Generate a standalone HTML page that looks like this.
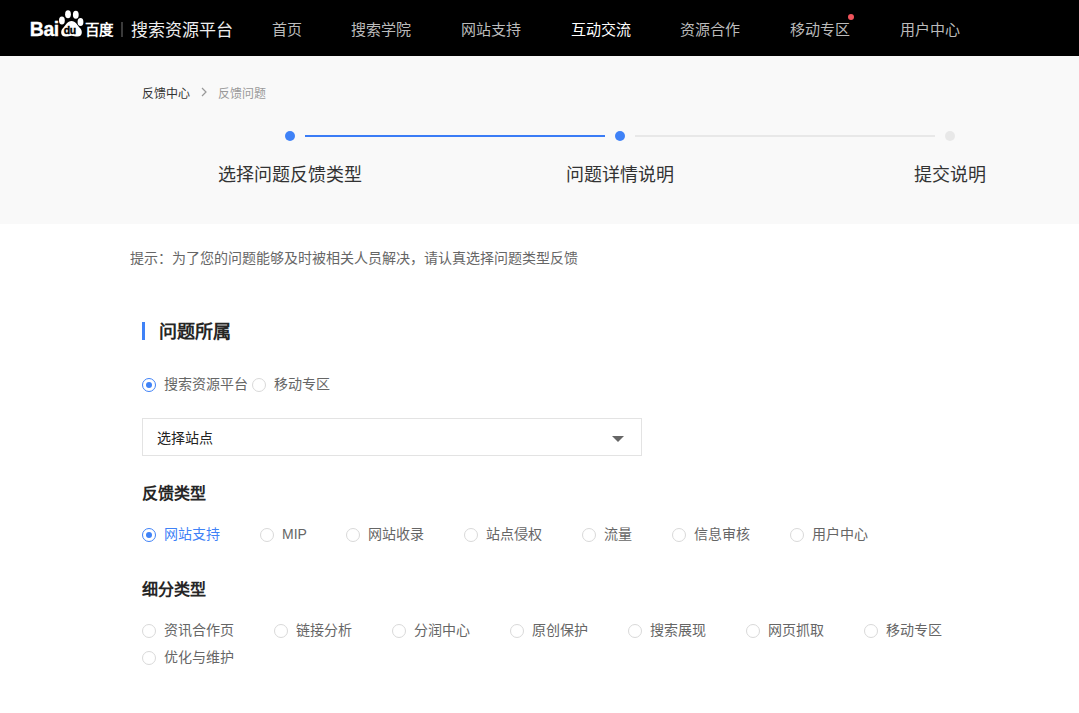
<!DOCTYPE html>
<html lang="zh-CN">
<head>
<meta charset="utf-8">
<style>
*{margin:0;padding:0;box-sizing:border-box}
html,body{width:1079px;height:713px;overflow:hidden;background:#fff;font-family:"Liberation Sans",sans-serif}
.abs{position:absolute;white-space:nowrap}
#hd{position:absolute;left:0;top:0;width:1079px;height:56px;background:#000}
.nav{position:absolute;top:2px;height:56px;line-height:56px;font-size:15px;color:#bbb}
.nav.on{color:#fff}
#band{position:absolute;left:0;top:56px;width:1079px;height:168px;background:#f9f9f9}
.crumb{font-size:12px;line-height:14px}
.dot{position:absolute;width:10px;height:10px;border-radius:50%;background:#3f82f7}
.line{position:absolute;height:2px;background:#3a7cf6}
.step{position:absolute;font-size:18px;line-height:24px;color:#333;text-align:center}
.tip{font-size:14px;color:#666;line-height:16px}
.h2{font-size:18px;font-weight:bold;color:#262626;line-height:20px}
.h3{font-size:16px;font-weight:bold;color:#262626;line-height:20px}
.rad{position:absolute;width:14px;height:14px;border:1px solid #d9d9d9;border-radius:50%;background:#fff}
.rad.on{border-color:#3f82f7}
.rad.on::after{content:"";position:absolute;left:3px;top:3px;width:6px;height:6px;border-radius:50%;background:#3f82f7}
.lbl{position:absolute;font-size:14px;line-height:16px;color:#666;white-space:nowrap}
.lbl.on{color:#3f82f7}
</style>
</head>
<body>
<div id="hd">
  <!-- logo -->
  <svg class="abs" style="left:0;top:0" width="130" height="56" viewBox="0 0 130 56">
    <g fill="#fff">
      <text x="29.8" y="36.2" font-family="Liberation Sans" font-weight="bold" font-size="19.5" letter-spacing="-0.5" stroke="#fff" stroke-width="0.3">Bai</text>
      <ellipse cx="68" cy="14.2" rx="2.9" ry="4"/>
      <ellipse cx="75.8" cy="14.8" rx="2.9" ry="4"/>
      <ellipse cx="61.9" cy="20.4" rx="2.9" ry="4"/>
      <ellipse cx="80.5" cy="22" rx="2.9" ry="4"/>
      <path d="M71.5 21C67.5 21 65.5 25.5 62.8 28.3C60 31.2 60.8 36.6 65.3 36.6C68.2 36.6 69.3 35.7 71.5 35.7C73.7 35.7 74.8 36.6 77.7 36.6C82.2 36.6 83 31.2 80.2 28.3C77.5 25.5 75.5 21 71.5 21Z"/>
    </g>
    <text x="63.8" y="33.5" fill="#000" font-family="Liberation Sans" font-weight="bold" font-size="10.5" letter-spacing="-0.5" stroke="#000" stroke-width="0.35">du</text>
  </svg>
  <div class="abs" style="left:85px;top:18.5px;font-size:14.5px;font-weight:900;color:#fff;line-height:22px;letter-spacing:0px">百度</div>
  <div class="abs" style="left:121px;top:22px;width:1.5px;height:15px;background:#3a3a3a"></div>
  <div class="abs" style="left:131px;top:18px;font-size:17px;color:#eee;line-height:26px">搜索资源平台</div>
  <div class="nav" style="left:272px">首页</div>
  <div class="nav" style="left:351px">搜索学院</div>
  <div class="nav" style="left:461px">网站支持</div>
  <div class="nav on" style="left:571px">互动交流</div>
  <div class="nav" style="left:680px">资源合作</div>
  <div class="nav" style="left:790px">移动专区</div>
  <div class="abs" style="left:848px;top:14px;width:6px;height:6px;border-radius:50%;background:#f0545c"></div>
  <div class="nav" style="left:900px">用户中心</div>
</div>

<div id="band">
  <div class="abs crumb" style="left:142px;top:31px;color:#333">反馈中心</div>
  <svg class="abs" style="left:200px;top:30px" width="8" height="12" viewBox="0 0 8 12"><path d="M2 2l4 4-4 4" fill="none" stroke="#999" stroke-width="1.2"/></svg>
  <div class="abs crumb" style="left:218px;top:31px;color:#999">反馈问题</div>

  <div class="dot" style="left:285px;top:75px"></div>
  <div class="line" style="left:305px;top:79px;width:300px"></div>
  <div class="dot" style="left:615px;top:75px"></div>
  <div class="line" style="left:635px;top:79px;width:300px;background:#e8e8e8"></div>
  <div class="dot" style="left:945px;top:75px;background:#e8e8e8"></div>

  <div class="step" style="left:190px;top:107px;width:200px">选择问题反馈类型</div>
  <div class="step" style="left:520px;top:107px;width:200px">问题详情说明</div>
  <div class="step" style="left:850px;top:107px;width:200px">提交说明</div>
</div>

<div class="abs tip" style="left:130px;top:250px">提示：为了您的问题能够及时被相关人员解决，请认真选择问题类型反馈</div>

<div class="abs" style="left:142px;top:322px;width:3px;height:18px;background:#3f82f7"></div>
<div class="abs h2" style="left:159px;top:322px">问题所属</div>

<div class="rad on" style="left:142px;top:378px"></div>
<div class="lbl" style="left:164px;top:376px">搜索资源平台</div>
<div class="rad" style="left:252px;top:378px"></div>
<div class="lbl" style="left:274px;top:376px">移动专区</div>

<div class="abs" style="left:142px;top:418px;width:500px;height:38px;border:1px solid #e3e3e3;background:#fff"></div>
<div class="abs" style="left:157px;top:430px;font-size:14px;line-height:16px;color:#222">选择站点</div>
<svg class="abs" style="left:611px;top:435px" width="14" height="8" viewBox="0 0 14 8"><path d="M1 1h12l-6 6z" fill="#666"/></svg>

<div class="abs h3" style="left:142px;top:484px">反馈类型</div>
<div class="rad on" style="left:142px;top:528px"></div><div class="lbl on" style="left:164px;top:526px">网站支持</div>
<div class="rad" style="left:260px;top:528px"></div><div class="lbl" style="left:282px;top:526px">MIP</div>
<div class="rad" style="left:346px;top:528px"></div><div class="lbl" style="left:368px;top:526px">网站收录</div>
<div class="rad" style="left:464px;top:528px"></div><div class="lbl" style="left:486px;top:526px">站点侵权</div>
<div class="rad" style="left:582px;top:528px"></div><div class="lbl" style="left:604px;top:526px">流量</div>
<div class="rad" style="left:672px;top:528px"></div><div class="lbl" style="left:694px;top:526px">信息审核</div>
<div class="rad" style="left:790px;top:528px"></div><div class="lbl" style="left:812px;top:526px">用户中心</div>

<div class="abs h3" style="left:142px;top:580px">细分类型</div>
<div class="rad" style="left:142px;top:624px"></div><div class="lbl" style="left:164px;top:622px">资讯合作页</div>
<div class="rad" style="left:274px;top:624px"></div><div class="lbl" style="left:296px;top:622px">链接分析</div>
<div class="rad" style="left:392px;top:624px"></div><div class="lbl" style="left:414px;top:622px">分润中心</div>
<div class="rad" style="left:510px;top:624px"></div><div class="lbl" style="left:532px;top:622px">原创保护</div>
<div class="rad" style="left:628px;top:624px"></div><div class="lbl" style="left:650px;top:622px">搜索展现</div>
<div class="rad" style="left:746px;top:624px"></div><div class="lbl" style="left:768px;top:622px">网页抓取</div>
<div class="rad" style="left:864px;top:624px"></div><div class="lbl" style="left:886px;top:622px">移动专区</div>
<div class="rad" style="left:142px;top:651px"></div><div class="lbl" style="left:164px;top:649px">优化与维护</div>
</body>
</html>
